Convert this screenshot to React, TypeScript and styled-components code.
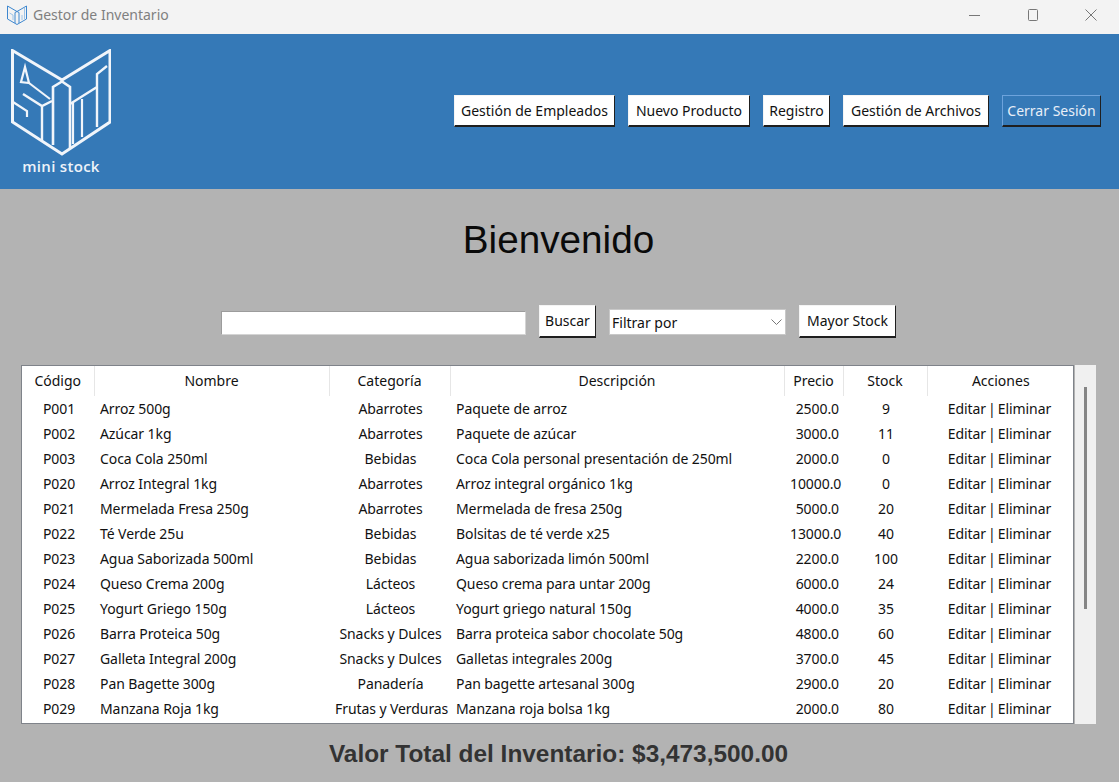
import React from "react";
import styled, { createGlobalStyle } from "styled-components";

interface Product {
  code: string;
  name: string;
  category: string;
  description: string;
  price: string;
  stock: number;
}

const products: Product[] = [
  { code: "P001", name: "Arroz 500g", category: "Abarrotes", description: "Paquete de arroz", price: "2500.0", stock: 9 },
  { code: "P002", name: "Azúcar 1kg", category: "Abarrotes", description: "Paquete de azúcar", price: "3000.0", stock: 11 },
  { code: "P003", name: "Coca Cola 250ml", category: "Bebidas", description: "Coca Cola personal presentación de 250ml", price: "2000.0", stock: 0 },
  { code: "P020", name: "Arroz Integral 1kg", category: "Abarrotes", description: "Arroz integral orgánico 1kg", price: "10000.0", stock: 0 },
  { code: "P021", name: "Mermelada Fresa 250g", category: "Abarrotes", description: "Mermelada de fresa 250g", price: "5000.0", stock: 20 },
  { code: "P022", name: "Té Verde 25u", category: "Bebidas", description: "Bolsitas de té verde x25", price: "13000.0", stock: 40 },
  { code: "P023", name: "Agua Saborizada 500ml", category: "Bebidas", description: "Agua saborizada limón 500ml", price: "2200.0", stock: 100 },
  { code: "P024", name: "Queso Crema 200g", category: "Lácteos", description: "Queso crema para untar 200g", price: "6000.0", stock: 24 },
  { code: "P025", name: "Yogurt Griego 150g", category: "Lácteos", description: "Yogurt griego natural 150g", price: "4000.0", stock: 35 },
  { code: "P026", name: "Barra Proteica 50g", category: "Snacks y Dulces", description: "Barra proteica sabor chocolate 50g", price: "4800.0", stock: 60 },
  { code: "P027", name: "Galleta Integral 200g", category: "Snacks y Dulces", description: "Galletas integrales 200g", price: "3700.0", stock: 45 },
  { code: "P028", name: "Pan Bagette 300g", category: "Panadería", description: "Pan bagette artesanal 300g", price: "2900.0", stock: 20 },
  { code: "P029", name: "Manzana Roja 1kg", category: "Frutas y Verduras", description: "Manzana roja bolsa 1kg", price: "2000.0", stock: 80 },
];

const columns = [
  { title: "Código", width: 72 },
  { title: "Nombre", width: 235 },
  { title: "Categoría", width: 121 },
  { title: "Descripción", width: 334 },
  { title: "Precio", width: 59 },
  { title: "Stock", width: 84 },
  { title: "Acciones", width: 147 },
];

const GlobalStyle = createGlobalStyle`
  html, body {
    margin: 0;
    padding: 0;
    background: #b3b3b3;
  }
  body {
    font-family: "Noto Sans", "Open Sans", sans-serif;
    font-size: 14px;
    color: #111;
    overflow: hidden;
  }
`;

const Window = styled.div`
  width: 1119px;
  height: 782px;
  display: flex;
  flex-direction: column;
  overflow: hidden;
`;

const TitleBar = styled.div`
  flex: 0 0 34px;
  box-sizing: border-box;
  display: flex;
  align-items: center;
  padding: 0 0 4px 7px;
  background: #f3f3f3;
`;

const WindowTitle = styled.span`
  margin: 0 0 2px 6px;
  font-size: 14px;
  color: #808080;
`;

const WindowControls = styled.div`
  margin-left: auto;
  padding-right: 5px;
  display: flex;
  gap: 12px;
`;

const WindowControl = styled.div`
  width: 46px;
  height: 30px;
  display: flex;
  align-items: center;
  justify-content: center;
  color: #777;
`;

const Header = styled.header`
  flex: 0 0 155px;
  display: flex;
  align-items: flex-start;
  justify-content: space-between;
  background: #3579b7;
  box-sizing: border-box;
  padding: 15px 18px 0 11px;
`;

const Brand = styled.div`
  width: 100px;
  display: flex;
  flex-direction: column;
  align-items: center;
`;

const BrandName = styled.div`
  font-family: "Open Sans", sans-serif;
  font-size: 15px;
  font-weight: 600;
  line-height: 20px;
  letter-spacing: 0.3px;
  color: #eef3f9;
`;

const Nav = styled.nav`
  margin-top: 46px;
  display: flex;
  gap: 13px;
`;

const RaisedButton = styled.button<{ $dark?: boolean }>`
  box-sizing: border-box;
  height: 32px;
  padding: 0 0 1px;
  border: 1px solid ${(p) => (p.$dark ? "#6da3dc" : "#f4f4f4")};
  border-right-color: #1f1f1f;
  border-bottom: 2px solid #1f1f1f;
  border-radius: 0;
  background: ${(p) => (p.$dark ? "#3579b7" : "#fff")};
  color: ${(p) => (p.$dark ? "#e8eff7" : "#111")};
  font-family: "Noto Sans", sans-serif;
  font-size: 14px;
  white-space: nowrap;
`;

const NavButton = styled(RaisedButton)<{ $width: number }>`
  width: ${(p) => p.$width}px;
`;

const Main = styled.main`
  flex: 1;
  display: flex;
  flex-direction: column;
  align-items: center;
  background: #b3b3b3;
`;

const Heading = styled.h1`
  margin: 28px 2px 0 0;
  font-family: "Liberation Sans", Arial, sans-serif;
  font-size: 38.7px;
  font-weight: 400;
  line-height: 46px;
  color: #0a0a0a;
`;

const SearchBar = styled.div`
  margin: 42px 2px 0 0;
  display: flex;
  align-items: center;
  gap: 13px;
`;

const SearchInput = styled.input`
  box-sizing: border-box;
  width: 305px;
  height: 24px;
  margin-top: 2px;
  border: 1px solid #9c9c9c;
  border-bottom-color: #d4d4d4;
  border-right-color: #d4d4d4;
  background: #fff;
  outline: none;
`;

const SearchButton = styled(RaisedButton)`
  width: 57px;
  height: 33px;
`;

const FilterSelect = styled.div`
  box-sizing: border-box;
  width: 177px;
  height: 26px;
  padding: 1px 3px 0 2px;
  display: flex;
  align-items: center;
  justify-content: space-between;
  border: 1px solid #c8c8c8;
  background: #fff;
  color: #111;
`;

const StockButton = styled(RaisedButton)`
  width: 97px;
  height: 33px;
`;

const TableArea = styled.div`
  margin: 27px 0 0 21px;
  width: 1075px;
  height: 359px;
  display: flex;
  align-self: flex-start;
`;

const TableFrame = styled.div`
  box-sizing: border-box;
  width: 1054px;
  height: 359px;
  border: 1px solid #7f838a;
  background: #fff;
  overflow: hidden;
`;

const Table = styled.table`
  width: 1052px;
  table-layout: fixed;
  border-collapse: collapse;
`;

const HeadCell = styled.th`
  height: 29px;
  padding: 0 0 1px;
  font-weight: 400;
  font-size: 14px;
  color: #111;
  border-right: 1px solid #e6e6e6;

  &:last-child {
    border-right: none;
  }
`;

const Cell = styled.td<{ $align?: string }>`
  height: 25px;
  padding: 0 4px 0 6px;
  font-size: 14px;
  line-height: 25px;
  letter-spacing: -0.08px;
  white-space: nowrap;
  overflow: hidden;
  text-align: ${(p) => p.$align || "center"};
  color: #111;
`;

const ActionCell = styled(Cell)`
  padding-right: 8px;
  word-spacing: -1.5px;
`;

const Scrollbar = styled.div`
  width: 21px;
  height: 359px;
  margin-left: 1px;
  background: #f0f0f0;
  display: flex;
  justify-content: center;
  padding-top: 22px;
  box-sizing: border-box;
`;

const ScrollThumb = styled.div`
  width: 3px;
  height: 222px;
  background: #858585;
`;

const Total = styled.div`
  margin: 16px 2px 0 0;
  font-family: "Liberation Sans", Arial, sans-serif;
  font-size: 24.4px;
  font-weight: 700;
  line-height: 28px;
  color: #333;
`;

function AppIcon() {
  return (
    <svg width="20" height="20" viewBox="0 0 20 20" fill="none" stroke="#3d87cf" strokeWidth="1">
      <path d="M0.5 1 L10 6.5 L19.5 1 V14 L10 19.5 L0.5 14 Z" />
      <path d="M8 7.5 L10 6.5 L12 7.5 V18 M8 7.5 V18" />
      <path d="M15 10 V15 M17.5 3 V14 M2.5 8 L6 10 V15" stroke="#9cc3e8" />
    </svg>
  );
}

function Logo() {
  return (
    <svg width="100" height="107" viewBox="0 0 100 107" fill="none" stroke="#f1f5fa" strokeWidth="3" strokeLinejoin="miter">
      <path d="M1.5 1.5 L51 31 L99 1.5 V73 L51 105 L1.5 73 Z" />
      <path d="M42 96 V38 L51 32.5 L59 38 V99" strokeWidth="2.6" />
      <path d="M59 55 L86 38 M86 78 V25 L96 17" strokeWidth="2.4" />
      <path d="M62 53 V95 M71 50 V88" strokeWidth="2.2" />
      <path d="M12 45 L31 57 L41 52 M31 57 V91" strokeWidth="2.4" />
      <path d="M2 53 L16 62 V68" strokeWidth="2.2" />
      <path d="M14 18 L10 33 L18 34 Z" strokeWidth="2.2" />
      <path d="M18 34 L39 50" strokeWidth="2.2" />
    </svg>
  );
}

function App() {
  return (
    <Window>
      <GlobalStyle />
      <TitleBar>
        <AppIcon />
        <WindowTitle>Gestor de Inventario</WindowTitle>
        <WindowControls>
          <WindowControl>
            <svg width="12" height="12" viewBox="0 0 12 12" stroke="currentColor" fill="none">
              <path d="M0 6.5 H11" />
            </svg>
          </WindowControl>
          <WindowControl>
            <svg width="12" height="12" viewBox="0 0 12 12" stroke="currentColor" fill="none">
              <rect x="1.5" y="0.5" width="9" height="11" rx="1" />
            </svg>
          </WindowControl>
          <WindowControl>
            <svg width="12" height="12" viewBox="0 0 12 12" stroke="currentColor" fill="none">
              <path d="M0.5 0.5 L11.5 11.5 M11.5 0.5 L0.5 11.5" />
            </svg>
          </WindowControl>
        </WindowControls>
      </TitleBar>
      <Header>
        <Brand>
          <Logo />
          <BrandName>mini stock</BrandName>
        </Brand>
        <Nav>
          <NavButton $width={161}>Gestión de Empleados</NavButton>
          <NavButton $width={122}>Nuevo Producto</NavButton>
          <NavButton $width={67}>Registro</NavButton>
          <NavButton $width={146}>Gestión de Archivos</NavButton>
          <NavButton $width={99} $dark>Cerrar Sesión</NavButton>
        </Nav>
      </Header>
      <Main>
        <Heading>Bienvenido</Heading>
        <SearchBar>
          <SearchInput />
          <SearchButton>Buscar</SearchButton>
          <FilterSelect>
            Filtrar por
            <svg width="11" height="7" viewBox="0 0 11 7" fill="none" stroke="#777">
              <path d="M0.5 0.5 L5.5 5.5 L10.5 0.5" />
            </svg>
          </FilterSelect>
          <StockButton>Mayor Stock</StockButton>
        </SearchBar>
        <TableArea>
          <TableFrame>
            <Table>
              <colgroup>
                {columns.map((c) => (
                  <col key={c.title} style={{ width: c.width }} />
                ))}
              </colgroup>
              <thead>
                <tr>
                  {columns.map((c) => (
                    <HeadCell key={c.title}>{c.title}</HeadCell>
                  ))}
                </tr>
              </thead>
              <tbody>
                {products.map((p) => (
                  <tr key={p.code}>
                    <Cell>{p.code}</Cell>
                    <Cell $align="left">{p.name}</Cell>
                    <Cell>{p.category}</Cell>
                    <Cell $align="left">{p.description}</Cell>
                    <Cell $align="right">{p.price}</Cell>
                    <Cell>{p.stock}</Cell>
                    <ActionCell>Editar | Eliminar</ActionCell>
                  </tr>
                ))}
              </tbody>
            </Table>
          </TableFrame>
          <Scrollbar>
            <ScrollThumb />
          </Scrollbar>
        </TableArea>
        <Total>Valor Total del Inventario: $3,473,500.00</Total>
      </Main>
    </Window>
  );
}

export default App;
